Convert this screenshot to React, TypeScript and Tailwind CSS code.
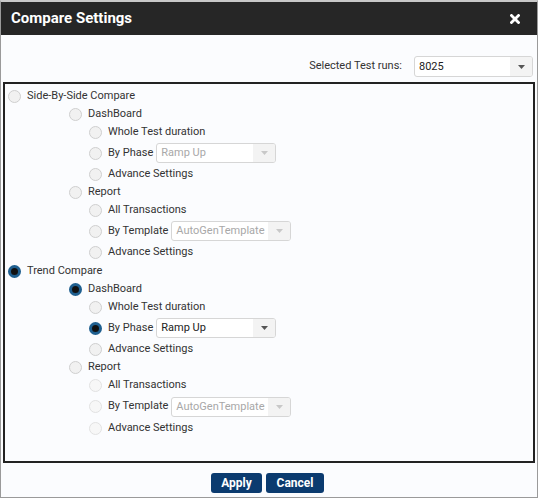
import React from 'react';

type Opt = { label: string; level: 0 | 1 | 2; checked?: boolean; disabled?: boolean; select?: { value: string; disabled?: boolean } };

function Radio({ checked, disabled }: { checked?: boolean; disabled?: boolean }) {
  if (checked) {
    return (
      <span className="w-[13px] h-[13px] rounded-full border-[3px] border-[#1f5f8f] bg-[#111] shrink-0" />
    );
  }
  return (
    <span
      className={`w-[13px] h-[13px] rounded-full border shrink-0 ${
        disabled ? 'border-[#e2e2e2] bg-[#f7f7f7]' : 'border-[#cfcfcf] bg-[#f1f1f1]'
      }`}
    />
  );
}

function Select({ value, disabled }: { value: string; disabled?: boolean }) {
  return (
    <div className="flex h-[20px] w-[120px] border border-[#d6d6d6] rounded-[3px] bg-white overflow-hidden">
      <span className={`flex-1 pl-[4px] leading-[18px] text-[11px] ${disabled ? 'text-[#a8a8a8]' : 'text-[#222]'}`}>
        {value}
      </span>
      <span className="w-[22px] bg-[#f3f3f3] flex items-center justify-center">
        <svg width="7" height="4" viewBox="0 0 7 4">
          <path d="M0 0h7L3.5 4z" fill={disabled ? '#c8c8c8' : '#555'} />
        </svg>
      </span>
    </div>
  );
}

const groups: Opt[][] = [
  [
    { label: 'Side-By-Side Compare', level: 0 },
    { label: 'DashBoard', level: 1 },
    { label: 'Whole Test duration', level: 2 },
    { label: 'By Phase', level: 2, select: { value: 'Ramp Up', disabled: true } },
    { label: 'Advance Settings', level: 2 },
    { label: 'Report', level: 1 },
    { label: 'All Transactions', level: 2 },
    { label: 'By Template', level: 2, select: { value: 'AutoGenTemplate', disabled: true } },
    { label: 'Advance Settings', level: 2 },
  ],
  [
    { label: 'Trend Compare', level: 0, checked: true },
    { label: 'DashBoard', level: 1, checked: true },
    { label: 'Whole Test duration', level: 2 },
    { label: 'By Phase', level: 2, checked: true, select: { value: 'Ramp Up' } },
    { label: 'Advance Settings', level: 2 },
    { label: 'Report', level: 1 },
    { label: 'All Transactions', level: 2, disabled: true },
    { label: 'By Template', level: 2, disabled: true, select: { value: 'AutoGenTemplate', disabled: true } },
    { label: 'Advance Settings', level: 2, disabled: true },
  ],
];

const indent = ['pl-[3px]', 'pl-[64px]', 'pl-[84px]'];

export default function App() {
  return (
    <div
      className="w-[538px] h-[498px] flex flex-col bg-[#fbfcfe] border border-[#9a9a9a] border-t-[2px] border-t-[#c8c8c8]"
      style={{ fontFamily: 'Roboto, "Liberation Sans", sans-serif' }}
    >
      <div className="h-[33px] bg-[#262626] flex items-center justify-between pl-[10px] pr-[17px] shrink-0">
        <span className="text-white font-bold text-[15px]">Compare Settings</span>
        <svg width="10" height="10" viewBox="0 0 10 10">
          <path d="M1.5 1.5l7 7M8.5 1.5l-7 7" stroke="#fff" strokeWidth="2.8" strokeLinecap="square" />
        </svg>
      </div>

      <div className="flex items-center justify-end gap-[12px] pr-[4px] pt-[21px] pb-[5px]">
        <span className="text-[11px] text-[#333]">Selected Test runs:</span>
        <div className="flex h-[21px] w-[119px] border border-[#d6d6d6] rounded-[3px] bg-white overflow-hidden">
          <span className="flex-1 pl-[4px] leading-[19px] text-[11px] text-[#222]">8025</span>
          <span className="w-[22px] bg-[#f3f3f3] flex items-center justify-center">
            <svg width="7" height="4" viewBox="0 0 7 4">
              <path d="M0 0h7L3.5 4z" fill="#555" />
            </svg>
          </span>
        </div>
      </div>

      <div className="mx-[2px] h-[381px] border-[2px] border-[#222] pt-[3px] flex flex-col">
        {groups.map((g, gi) => (
          <div key={gi} className={`flex flex-col ${gi === 0 ? 'pb-[1px]' : ''}`}>
            {g.map((o, i) => (
              <div
                key={i}
                className={`flex items-center shrink-0 ${indent[o.level]} ${
                  o.select ? (gi === 1 && i === 7 ? 'h-[25px]' : 'h-[24px]') : 'h-[18px]'
                }`}
              >
                <Radio checked={o.checked} disabled={o.disabled} />
                <span className="ml-[6px] mr-[3px] text-[11px] text-[#333] whitespace-nowrap">{o.label}</span>
                {o.select && <Select value={o.select.value} disabled={o.select.disabled} />}
              </div>
            ))}
          </div>
        ))}
      </div>

      <div className="flex justify-center gap-[4px] pt-[10px] pr-[3px]">
        <button className="h-[20px] w-[51px] rounded-[3px] bg-[#0b3b6f] text-white font-bold text-[12px]">Apply</button>
        <button className="h-[20px] w-[58px] rounded-[3px] bg-[#0b3b6f] text-white font-bold text-[12px]">Cancel</button>
      </div>
    </div>
  );
}
